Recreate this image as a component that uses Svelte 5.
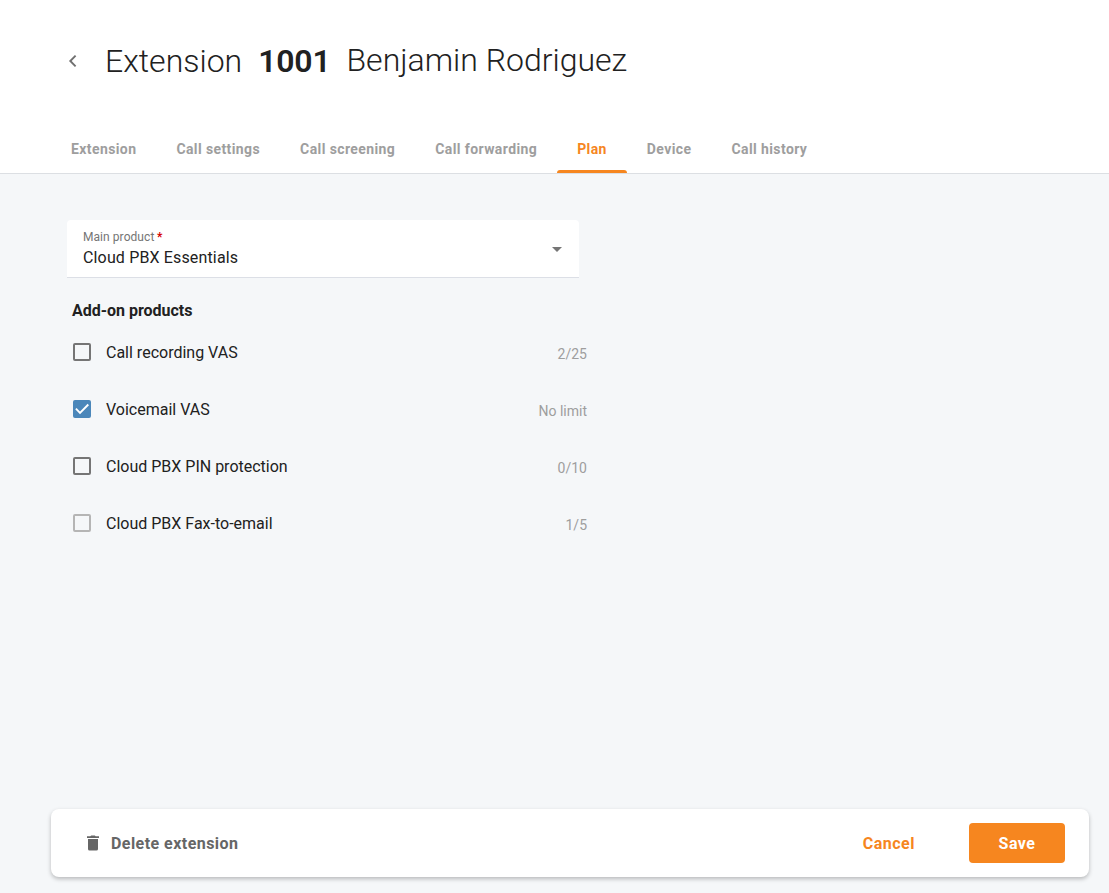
<script>
  const tabs = ['Extension', 'Call settings', 'Call screening', 'Call forwarding', 'Plan', 'Device', 'Call history'];
  const addons = [
    { name: 'Call recording VAS', limit: '2/25' },
    { name: 'Voicemail VAS', limit: 'No limit', checked: true },
    { name: 'Cloud PBX PIN protection', limit: '0/10' },
    { name: 'Cloud PBX Fax-to-email', limit: '1/5', disabled: true }
  ];
</script>

<div class="page">
  <header>
    <div class="title">
      <svg class="back" width="24" height="24" viewBox="0 0 24 24"><path d="M15.300 6.700 10 12l5.300 5.300" transform="translate(-.7 0)" fill="none" stroke="#707070" stroke-width="1.900" /></svg>
      <h1><span>Extension</span><b>1001</b><span class="person">Benjamin Rodriguez</span></h1>
    </div>
    <nav>
      {#each tabs as tab}
        <a class:active={tab === 'Plan'}>{tab}</a>
      {/each}
    </nav>
  </header>

  <main>
    <div class="select">
      <div class="field">
        <label>Main product<i>*</i></label>
        <span>Cloud PBX Essentials</span>
      </div>
      <svg width="10" height="5" viewBox="0 0 10 5"><path d="M0 0h10L5 5z" fill="#757575" /></svg>
    </div>
    <h2>Add-on products</h2>
    <ul>
      {#each addons as a}
        <li>
          <span class="box" class:checked={a.checked} class:disabled={a.disabled}>
            {#if a.checked}
              <svg width="18" height="18" viewBox="0 0 18 18"><path d="M2.900 8.700 7 12.800l8.300-8.300" fill="none" stroke="#fff" stroke-width="1.900" /></svg>
            {/if}
          </span>
          <span class="name">{a.name}</span>
          <span class="limit">{a.limit}</span>
        </li>
      {/each}
    </ul>
  </main>

  <footer>
    <button class="delete">
      <svg width="12" height="16" viewBox="0 0 12 16"><path d="M1 4h10v10q0 1.600-1.600 1.600H2.600Q1 15.600 1 14zM0 1.300h3.300L4.200.4h3.600l.9.900H12V3H0z" fill="#666" /></svg>
      Delete extension
    </button>
    <button class="cancel">Cancel</button>
    <button class="save">Save</button>
  </footer>
</div>

<style>
  :global(body) { margin: 0; }
  .page { box-sizing: border-box; height: 893px; display: flex; flex-direction: column; background: #f5f7f9; color: #212121; font-family: Roboto, sans-serif; }
  header { box-sizing: border-box; height: 174px; background: #fff; border-bottom: 1px solid #dcdfe3; display: flex; flex-direction: column; justify-content: space-between; }
  .title { display: flex; align-items: center; padding: 41px 0 0 61px; height: 40px; }
  h1 { margin: 0 0 0 20px; font-size: 32px; line-height: 40px; font-weight: 300; display: flex; white-space: nowrap; }
  h1 b { font-weight: 600; letter-spacing: -0.2px; margin: 0 16px 0 16px; }
  h1 .person { position: relative; top: -1px; }
  nav { display: flex; margin-left: 51px; }
  nav a { position: relative; box-sizing: border-box; height: 49px; padding: 15px 20px 0; font-size: 14px; line-height: 21px; font-weight: 700; letter-spacing: 0.4px; color: #9e9e9e; white-space: nowrap; }
  nav a.active { color: #f6861f; }
  nav a.active::after { content: ''; position: absolute; left: 0; right: 0; bottom: 0; height: 3px; background: #f6861f; border-radius: 3px 3px 0 0; }
  main { flex: 1; padding: 46px 0 0 67px; }
  .select { box-sizing: border-box; width: 512px; height: 58px; padding: 0 17px 0 16px; background: #fff; border-bottom: 1px solid #dcdfe6; border-radius: 4px 4px 0 0; display: flex; align-items: center; justify-content: space-between; }
  .select svg { margin-top: 2px; }
  .field { display: flex; flex-direction: column; }
  label { font-size: 12px; line-height: 16px; margin-bottom: 2px; letter-spacing: 0.06px; color: #757575; }
  label i { color: #d50000; font-style: normal; font-weight: 700; margin-left: 2.5px; }
  .field span { font-size: 16px; line-height: 22px; letter-spacing: 0.15px; }
  h2 { margin: 21px 0 0 5px; font-size: 16px; line-height: 24px; font-weight: 700; letter-spacing: -0.02px; }
  ul { margin: 1px 0 0 6px; padding: 0; width: 514px; list-style: none; }
  li { display: flex; align-items: center; height: 57px; }
  .box { box-sizing: border-box; width: 18px; height: 18px; margin-bottom: 2px; border: 2px solid #757575; border-radius: 2px; }
  .box.checked { border: 0; background: #4b87ba; }
  .box.disabled { border-color: #b5b5b5; }
  .box svg { display: block; }
  .name { font-size: 16px; margin-left: 15px; flex: 1; }
  .limit { font-size: 14px; color: #9e9e9e; padding-top: 3px; }
  footer { box-sizing: border-box; height: 68px; margin: 0 20px 16px 51px; padding: 0 24px 0 36px; display: flex; align-items: center; background: #fff; border-radius: 8px; box-shadow: 0 2px 4px rgba(0,0,0,.25); }
  button { border: 0; background: none; padding: 0; font: 700 16px Roboto, sans-serif; letter-spacing: 0.5px; }
  .delete { display: flex; align-items: center; gap: 12px; color: #666; letter-spacing: 0.45px; margin-right: auto; }
  .cancel { color: #f6861f; margin-right: 54px; }
  .save { width: 96px; height: 40px; background: #f6861f; color: #fff; border-radius: 4px; }
</style>
